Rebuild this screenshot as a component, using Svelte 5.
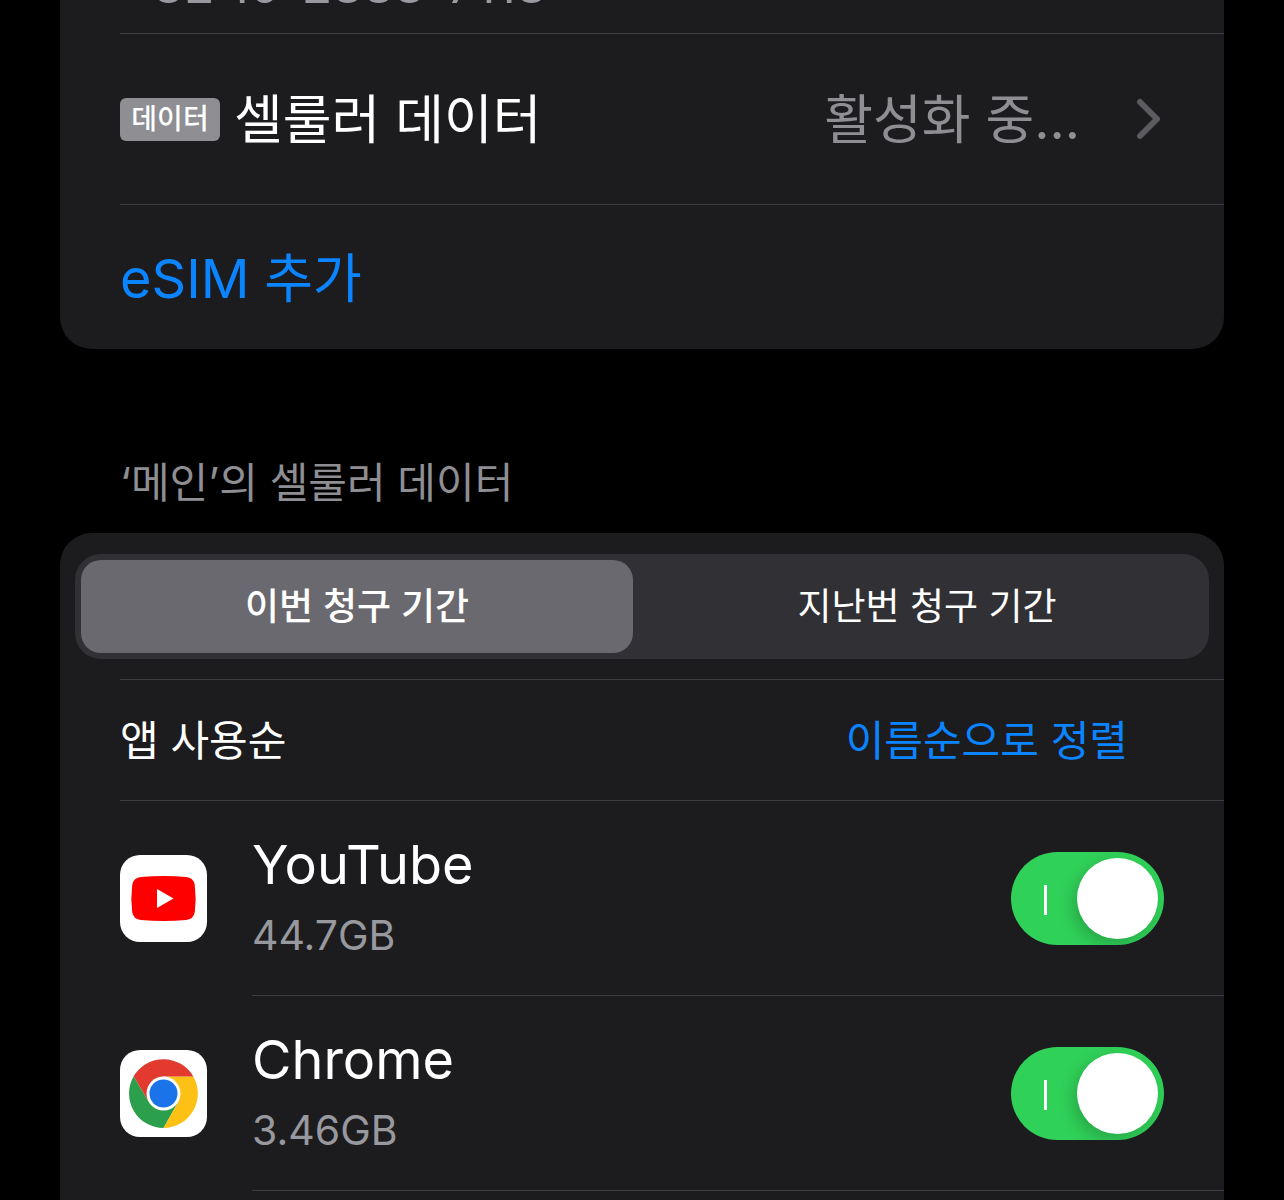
<script lang="ts">
    const periods = ["이번 청구 기간", "지난번 청구 기간"];

    let period = $state(0);
    let apps = $state([
        { id: "youtube", name: "YouTube", usage: "44.7GB", enabled: true },
        { id: "chrome", name: "Chrome", usage: "3.46GB", enabled: true },
    ]);
</script>

<main>
    <section class="card plans">
        <div class="row phone">
            <p class="number">+82 10-2888-7118</p>
        </div>
        <a class="row plan" href="#cellular">
            <span class="badge">데이터</span>
            <span class="title">셀룰러 데이터</span>
            <span class="status">활성화 중...</span>
            <svg class="chevron" viewBox="0 0 26 42" aria-hidden="true">
                <path d="M4 4 L21 21 L4 38" />
            </svg>
        </a>
        <button class="row esim">
            <span><span class="latin">eSIM</span> 추가</span>
        </button>
    </section>

    <h2>‘메인’의 셀룰러 데이터</h2>

    <section class="card usage">
        <div class="segments">
            {#each periods as label, i}
                <button
                    class:selected={period === i}
                    aria-pressed={period === i}
                    onclick={() => (period = i)}
                >
                    {label}
                </button>
            {/each}
        </div>
        <div class="row sort">
            <span>앱 사용순</span>
            <button>이름순으로 정렬</button>
        </div>
        {#each apps as app}
            <div class="app">
                {#if app.id === "youtube"}
                    <svg class="icon" viewBox="0 0 87 87" aria-hidden="true">
                        <rect width="87" height="87" rx="20" fill="#fff" />
                        <path
                            d="M21 22 Q43.5 20 66 22 Q73.5 22.500 74.800 30 Q76.500 43.500 74.800 57 Q73.500 64.500 66 65 Q43.500 67 21 65 Q13.500 64.500 12.200 57 Q10.500 43.500 12.200 30 Q13.500 22.500 21 22 Z"
                            fill="#f00"
                        />
                        <path d="M37 34 L53.500 43.500 L37 53 Z" fill="#fff" />
                    </svg>
                {:else}
                    <svg class="icon" viewBox="0 0 87 87" aria-hidden="true">
                        <rect width="87" height="87" rx="20" fill="#fff" />
                        <path
                            d="M43.500 43.500 L28.780 52 L13.660 26.250 A34.500 34.500 0 0 0 43.500 78 L58.220 52 Z"
                            fill="#2b9f4b"
                        />
                        <path
                            d="M43.500 26.500 H73.340 A34.500 34.500 0 0 1 43.500 78 L58.220 52 Z"
                            fill="#fdc014"
                        />
                        <path
                            d="M43.500 43.500 V26.500 H73.340 A34.500 34.500 0 0 0 13.660 26.250 L28.780 52 Z"
                            fill="#e23a2f"
                        />
                        <circle cx="43.500" cy="43.500" r="17" fill="#fff" />
                        <circle cx="43.500" cy="43.500" r="14" fill="#1a73e8" />
                    </svg>
                {/if}
                <div class="row details">
                    <label for={app.id}>
                        <span class="name">{app.name}</span>
                        <span class="amount">{app.usage}</span>
                    </label>
                    <input
                        type="checkbox"
                        role="switch"
                        id={app.id}
                        bind:checked={app.enabled}
                    />
                </div>
            </div>
        {/each}
    </section>
</main>

<style>
    :global(body) {
        background: #000;
    }
    main {
        box-sizing: border-box;
        height: 100vh;
        overflow: hidden;
        padding: 0 60px;
        display: flex;
        flex-direction: column;
        color: #fff;
        font-family: Inter, "Noto Sans CJK KR", sans-serif;
        font-size: 53px;
    }
    p,
    h2 {
        margin: 0;
        font-weight: 400;
    }
    button {
        padding: 0;
        border: 0;
        background: none;
        color: inherit;
        font: inherit;
        text-align: left;
    }
    a {
        color: inherit;
        text-decoration: none;
    }
    .card {
        background: #1c1c1e;
        border-radius: 32px;
    }
    .plans {
        flex: none;
        margin-top: -80px;
        padding-left: 60px;
        display: flex;
        flex-direction: column;
    }
    .row {
        box-sizing: border-box;
        display: flex;
        align-items: center;
        padding-right: 60px;
        border-bottom: 1px solid #3d3d41;
    }
    .phone {
        height: 114px;
        padding-bottom: 22px;
        align-items: flex-end;
    }
    .number {
        color: #98989f;
        font-size: 50px;
        line-height: 52px;
    }
    .plan {
        height: 171px;
        padding-right: 62px;
    }
    .badge {
        box-sizing: border-box;
        width: 100px;
        height: 43px;
        margin-right: 14px;
        border-radius: 6px;
        background: #8e8e93;
        font-size: 28px;
        font-weight: 500;
        line-height: 43px;
        text-align: center;
    }
    .title,
    .status {
        padding-bottom: 7px;
    }
    .status {
        margin-left: auto;
        color: #8e8e93;
    }
    .chevron {
        width: 26px;
        height: 42px;
        margin-left: 56px;
        fill: none;
        stroke: #5b5b60;
        stroke-width: 6;
        stroke-linecap: round;
        stroke-linejoin: round;
    }
    .esim {
        height: 144px;
        padding-bottom: 4px;
        border-bottom: 0;
        color: #0a84ff;
    }
    .latin {
        font-size: 54px;
    }
    h2 {
        flex: none;
        padding: 102px 60px 18px;
        color: #8e8e93;
        font-size: 42px;
        line-height: 64px;
    }
    .usage {
        flex: 1 0 auto;
        border-radius: 32px 32px 0 0;
    }
    .segments {
        margin: 21px 15px 20px;
        padding: 6px;
        display: grid;
        grid-template-columns: 1fr 1fr;
        gap: 18px;
        border-radius: 26px;
        background: #313135;
    }
    .segments button {
        height: 93px;
        padding-bottom: 6px;
        border-radius: 20px;
        font-size: 37px;
        text-align: center;
    }
    .segments .selected {
        background: #6a696f;
        font-weight: 500;
    }
    .sort {
        height: 122px;
        margin-left: 60px;
        padding-right: 96px;
        padding-bottom: 6px;
        justify-content: space-between;
        border-top: 1px solid #3d3d41;
        font-size: 42px;
    }
    .sort button {
        color: #0a84ff;
    }
    .app {
        display: flex;
        align-items: center;
        gap: 45px;
        padding-left: 60px;
    }
    .icon {
        width: 87px;
        height: 87px;
    }
    .details {
        flex: 1;
        height: 195px;
        justify-content: space-between;
    }
    label {
        display: flex;
        flex-direction: column;
    }
    .name {
        font-size: 54px;
        line-height: 74px;
    }
    .amount {
        color: #98989f;
        font-size: 41px;
        line-height: 66px;
    }
    input {
        appearance: none;
        box-sizing: border-box;
        width: 153px;
        height: 93px;
        margin: 0;
        padding: 6px;
        display: flex;
        align-items: center;
        justify-content: flex-end;
        overflow: hidden;
        border-radius: 47px;
        background: #39393d;
    }
    input:checked {
        background: #30d158;
    }
    input::before {
        content: "";
        width: 3px;
        height: 30px;
        margin-top: 3px;
        margin-right: 30px;
        background: #fff;
    }
    input::after {
        content: "";
        width: 81px;
        height: 81px;
        border-radius: 50%;
        background: #fff;
        box-shadow: -4px 6px 16px #0003;
    }
    input:not(:checked) {
        flex-direction: row-reverse;
    }
</style>
